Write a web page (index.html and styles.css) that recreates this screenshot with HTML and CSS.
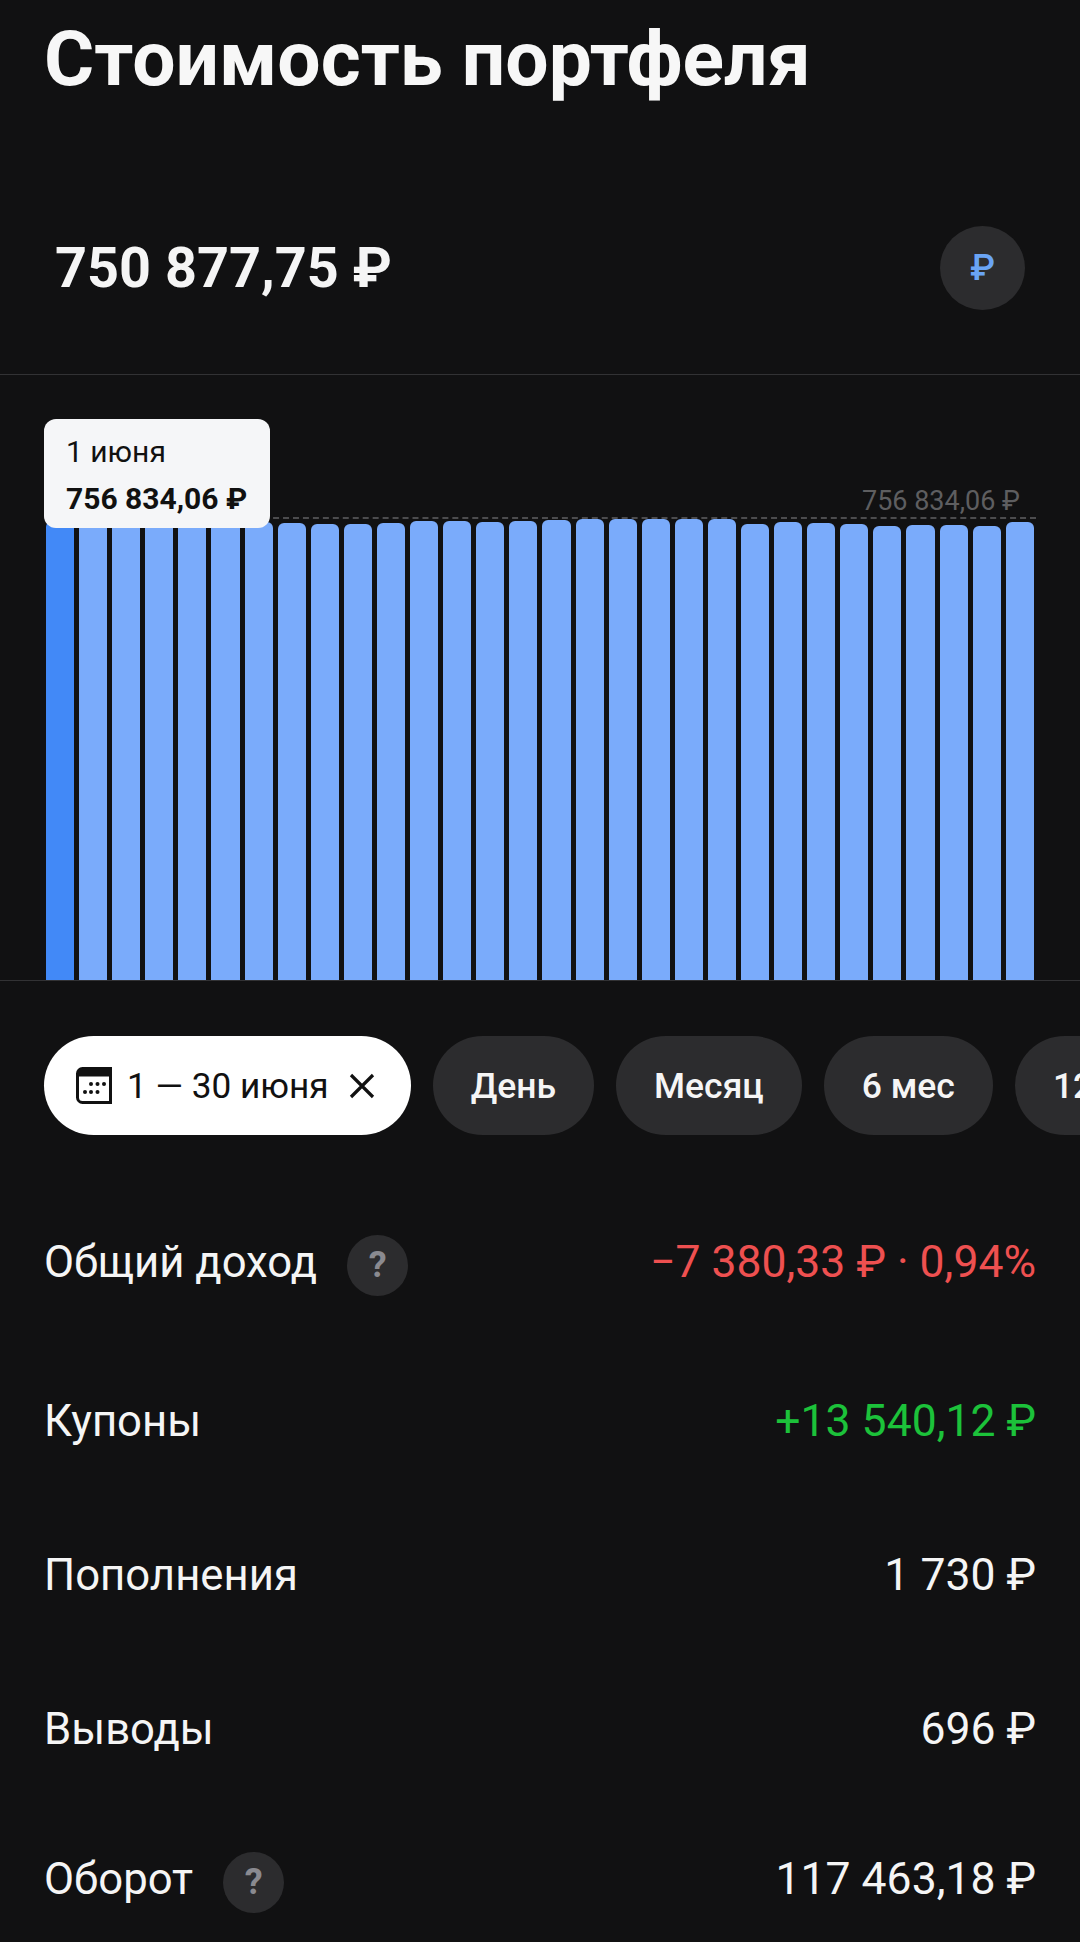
FILE: index.html
```html
<!DOCTYPE html>
<html lang="ru">
<head>
  <meta charset="UTF-8" />
  <meta name="viewport" content="width=device-width, initial-scale=1.0" />
  <title>Стоимость портфеля</title>
  <link rel="stylesheet" href="styles.css">
</head>
<body>
  <h1 class="title">Стоимость портфеля</h1>

  <section class="balance">
    <div class="balance-value">750 877,75 ₽</div>
    <button class="currency">₽</button>
  </section>

  <section class="chart">
    <div class="tooltip">
      <div class="tooltip-date">1 июня</div>
      <div class="tooltip-value">756 834,06 ₽</div>
    </div>
    <div class="max-label">756 834,06 ₽</div>
    <div class="max-line"></div>
    <div class="bars">
      <div class="bar bar-active" style="height:459px"></div>
      <div class="bar" style="height:459px"></div>
      <div class="bar" style="height:459px"></div>
      <div class="bar" style="height:459px"></div>
      <div class="bar" style="height:459px"></div>
      <div class="bar" style="height:459px"></div>
      <div class="bar" style="height:458px"></div>
      <div class="bar" style="height:457px"></div>
      <div class="bar" style="height:456px"></div>
      <div class="bar" style="height:456px"></div>
      <div class="bar" style="height:457px"></div>
      <div class="bar" style="height:459px"></div>
      <div class="bar" style="height:459px"></div>
      <div class="bar" style="height:458px"></div>
      <div class="bar" style="height:459px"></div>
      <div class="bar" style="height:460px"></div>
      <div class="bar" style="height:461px"></div>
      <div class="bar" style="height:461px"></div>
      <div class="bar" style="height:461px"></div>
      <div class="bar" style="height:461px"></div>
      <div class="bar" style="height:461px"></div>
      <div class="bar" style="height:456px"></div>
      <div class="bar" style="height:458px"></div>
      <div class="bar" style="height:457px"></div>
      <div class="bar" style="height:456px"></div>
      <div class="bar" style="height:454px"></div>
      <div class="bar" style="height:455px"></div>
      <div class="bar" style="height:455px"></div>
      <div class="bar" style="height:454px"></div>
      <div class="bar" style="height:458px"></div>
    </div>
  </section>

  <nav class="chips">
    <button class="chip chip-active">
      <svg class="chip-icon" viewBox="0 0 36 37" width="36" height="37">
        <path d="M1.5 6.5a5 5 0 0 1 5-5h28v34h-28a5 5 0 0 1-5-5z" fill="none" stroke="#111" stroke-width="3"/>
        <path d="M1.5 6.5a5 5 0 0 1 5-5h28v8h-33z" fill="#111"/>
        <g fill="#111">
          <circle cx="15" cy="17" r="2"/><circle cx="21.5" cy="17" r="2"/><circle cx="28" cy="17" r="2"/>
          <circle cx="9" cy="25" r="2"/><circle cx="15" cy="25" r="2"/><circle cx="21.5" cy="25" r="2"/>
        </g>
      </svg>
      <span>1 — 30 июня</span>
      <svg class="chip-close" viewBox="0 0 26 26" width="26" height="26">
        <path d="M2 2l22 22M24 2L2 24" stroke="#111" stroke-width="3.2" fill="none"/>
      </svg>
    </button>
    <button class="chip">День</button>
    <button class="chip">Месяц</button>
    <button class="chip">6 мес</button>
    <button class="chip">12 мес</button>
  </nav>

  <section class="stats">
    <div class="row row-first">
      <div class="row-name">Общий доход <span class="hint">?</span></div>
      <div class="row-value red">−7 380,33 ₽ · 0,94%</div>
    </div>
    <div class="row">
      <div class="row-name">Купоны</div>
      <div class="row-value green">+13 540,12 ₽</div>
    </div>
    <div class="row">
      <div class="row-name">Пополнения</div>
      <div class="row-value">1 730 ₽</div>
    </div>
    <div class="row">
      <div class="row-name">Выводы</div>
      <div class="row-value">696 ₽</div>
    </div>
    <div class="row row-last">
      <div class="row-name">Оборот <span class="hint">?</span></div>
      <div class="row-value">117 463,18 ₽</div>
    </div>
  </section>
</body>
</html>
```

FILE: styles.css
```css
html, body {
  height: 1942px;
}
body {
  margin: 0;
  overflow: hidden;
  font-family: Roboto, "Liberation Sans", sans-serif;
  background-color: #111112;
  color: #f5f5f5;
}
button {
  font-family: inherit;
  border: none;
}
.title {
  margin: 0;
  padding: 14px 44px 0;
  height: 106px;
  font-size: 76.8px;
  line-height: 90px;
  font-weight: 700;
  color: #f7f7f7;
}
.balance {
  display: flex;
  justify-content: space-between;
  align-items: center;
  height: 255px;
  padding: 42px 55px 0;
  border-bottom: 1px solid #323234;
  box-sizing: border-box;
}
.balance-value {
  font-size: 55.8px;
  font-weight: 700;
}
.currency {
  width: 85px;
  height: 84px;
  border-radius: 50%;
  background: #2c2c2e;
  color: #6aa4f4;
  font-size: 36px;
  font-weight: 500;
  padding: 0;
}
.chart {
  position: relative;
  height: 606px;
  border-bottom: 1px solid #323234;
  box-sizing: border-box;
  display: flex;
  align-items: flex-end;
  padding: 0 46px;
}
.bars {
  display: flex;
  align-items: flex-end;
  gap: 5px;
  width: 100%;
}
.bar {
  flex: 1;
  background: #7aabfb;
  border-radius: 6px 6px 0 0;
}
.bar-active {
  background: #4289f7;
}
.tooltip {
  position: absolute;
  left: 44px;
  top: 44px;
  width: 226px;
  height: 109px;
  box-sizing: border-box;
  padding: 16px 22px;
  border-radius: 12px;
  background: #f5f6f8;
  color: #111;
  z-index: 2;
}
.tooltip-date {
  font-size: 30px;
  line-height: 34px;
  margin-bottom: 13px;
}
.tooltip-value {
  font-size: 30px;
  line-height: 34px;
  font-weight: 700;
}
.max-label {
  position: absolute;
  right: 60px;
  top: 109px;
  font-size: 27px;
  line-height: 34px;
  color: #5e5e60;
}
.max-line {
  position: absolute;
  left: 44px;
  right: 44px;
  top: 142px;
  border-top: 2px dashed #4c4c4e;
}
.chips {
  display: flex;
  gap: 22px;
  padding: 55px 0 0 44px;
  overflow: hidden;
}
.chip {
  flex: none;
  display: flex;
  align-items: center;
  height: 99px;
  padding: 0 38px;
  border-radius: 50px;
  background: #2c2c2e;
  color: #f5f5f5;
  font-size: 35.5px;
  font-weight: 500;
}
.chip-active {
  background: #fff;
  color: #111;
  font-size: 35.2px;
  font-weight: 400;
  padding: 0 36px 0 32px;
}
.chip-icon {
  margin-right: 15px;
}
.chip-close {
  margin-left: 20px;
}
.stats {
  padding: 0 44px;
}
.row {
  display: flex;
  justify-content: space-between;
  align-items: center;
  height: 154px;
  font-size: 44.5px;
}
.row-first {
  margin-top: 45px;
  height: 164px;
}
.row-last {
  margin-top: -4px;
}
.row-name {
  display: flex;
  align-items: center;
  gap: 30px;
  font-size: 43.7px;
}
.hint {
  display: flex;
  justify-content: center;
  align-items: center;
  width: 61px;
  height: 61px;
  margin-top: 6px;
  border-radius: 50%;
  background: #2c2c2e;
  color: #8a8a90;
  font-size: 36px;
  font-weight: 700;
}
.red {
  color: #ee5050;
}
.green {
  color: #1cc23a;
}
```
